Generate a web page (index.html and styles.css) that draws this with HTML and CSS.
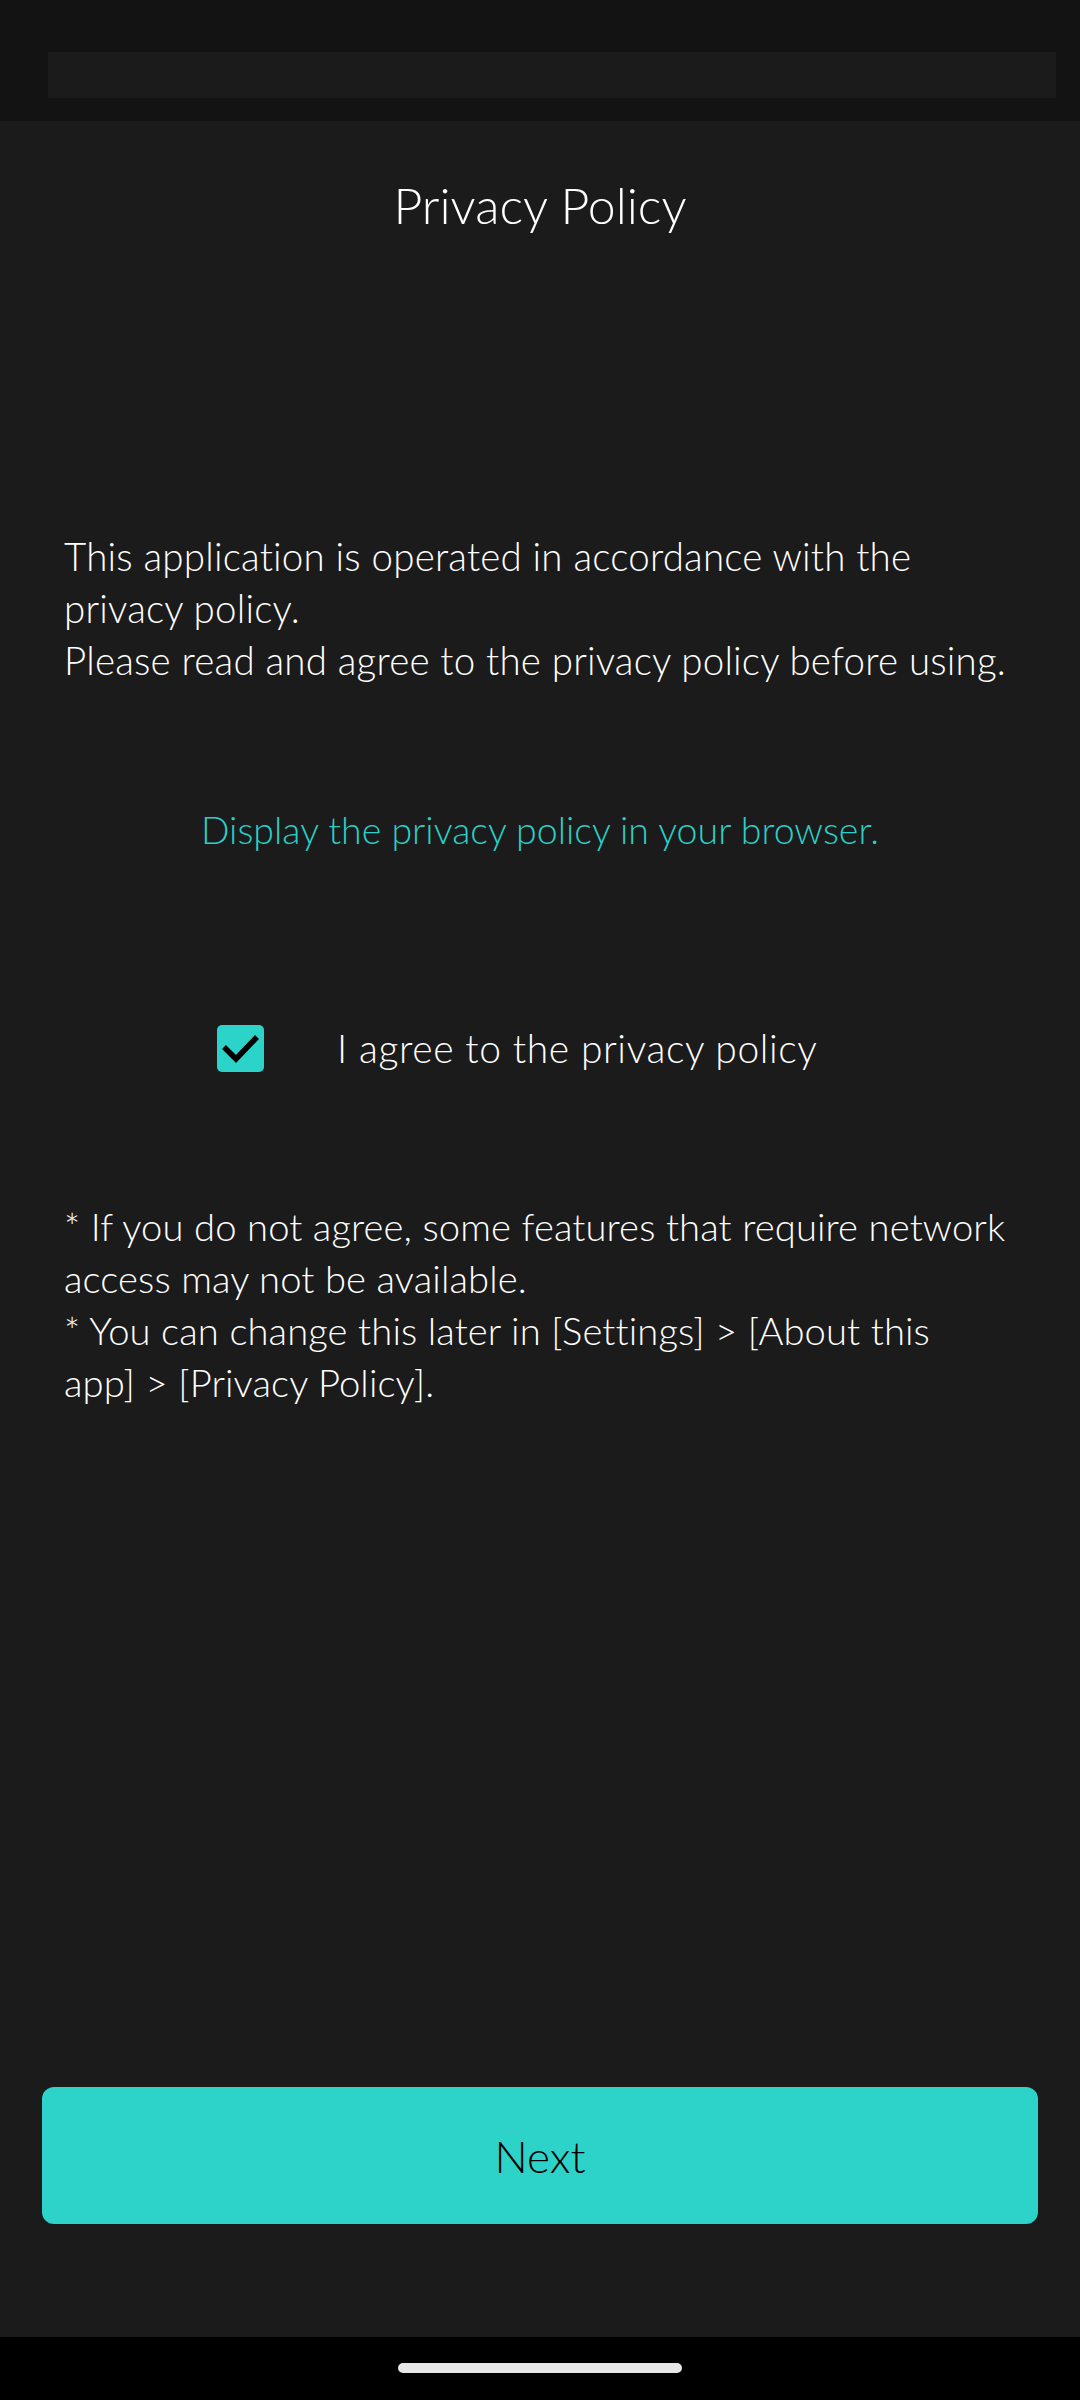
FILE: index.html
```html
<!DOCTYPE html>
<html lang="en">
<head>
<meta charset="utf-8">
<title>Privacy Policy</title>
<link rel="stylesheet" href="styles.css">
</head>
<body>
<div class="statusbar"><div class="statusbar-inner"></div></div>
<main class="content">
  <h1 class="title">Privacy Policy</h1>
  <p class="intro">This application is operated in accordance with the<br>privacy policy.<br>Please read and agree to the privacy policy before using.</p>
  <a class="link" href="#">Display the privacy policy in your browser.</a>
  <label class="agree">
    <span class="checkbox">
      <svg viewBox="0 0 47 47" width="47" height="47"><polyline points="7,22 19,34 40,12" fill="none" stroke="#000" stroke-width="5.5" stroke-linecap="butt" stroke-linejoin="miter"/></svg>
    </span>
    <span class="agree-text">I agree to the privacy policy</span>
  </label>
  <p class="notes">* If you do not agree, some features that require network<br>access may not be available.<br>* You can change this later in [Settings] &gt; [About this<br>app] &gt; [Privacy Policy].</p>
  <div class="spacer"></div>
  <button class="next" type="button">Next</button>
</main>
<div class="navbar"><div class="handle"></div></div>
</body>
</html>
```
FILE: styles.css
```css
html, body {
  margin: 0;
  padding: 0;
}
body {
  width: 1080px;
  height: 2400px;
  background: #1b1b1b;
  color: #ffffff;
  font-family: "Lato", "Noto Sans", sans-serif;
  font-weight: 300;
  display: flex;
  flex-direction: column;
  overflow: hidden;
}
.statusbar {
  height: 121px;
  background: #131313;
  padding: 52px 24px 0 48px;
  box-sizing: border-box;
  flex: none;
}
.statusbar-inner {
  height: 46px;
  background: #1b1b1b;
}
.content {
  flex: 1;
  display: flex;
  flex-direction: column;
  padding: 0 42px;
}
.title {
  margin: 52px 0 0;
  font-size: 50px;
  line-height: 64px;
  font-weight: 300;
  text-align: center;
}
.intro {
  margin: 293px 0 0 22px;
  font-size: 38.5px;
  line-height: 52px;
  letter-spacing: 0.2px;
}
.link {
  margin: 118px auto 0;
  font-size: 37.5px;
  line-height: 52px;
  color: #2bcfc7;
  text-decoration: none;
}
.agree {
  margin: 166px 0 0 175px;
  display: flex;
  align-items: center;
  gap: 73px;
}
.checkbox {
  width: 47px;
  height: 47px;
  border-radius: 5px;
  background: #2bd3c9;
  display: flex;
}
.agree-text {
  font-size: 39px;
  line-height: 52px;
  letter-spacing: 0.6px;
}
.notes {
  margin: 126px 0 0 22px;
  font-size: 38.2px;
  line-height: 52px;
  letter-spacing: 0.1px;
}
.spacer {
  flex: 1;
}
.next {
  height: 137px;
  margin: 0 0 113px;
  border: none;
  border-radius: 12px;
  background: #2dd3c9;
  color: #000;
  font-family: inherit;
  font-weight: 300;
  font-size: 44px;
}
.navbar {
  height: 63px;
  background: #000;
  display: flex;
  justify-content: center;
  padding-top: 26px;
  box-sizing: border-box;
  flex: none;
}
.handle {
  width: 284px;
  height: 10px;
  border-radius: 5px;
  background: #e8e8e8;
}
```
